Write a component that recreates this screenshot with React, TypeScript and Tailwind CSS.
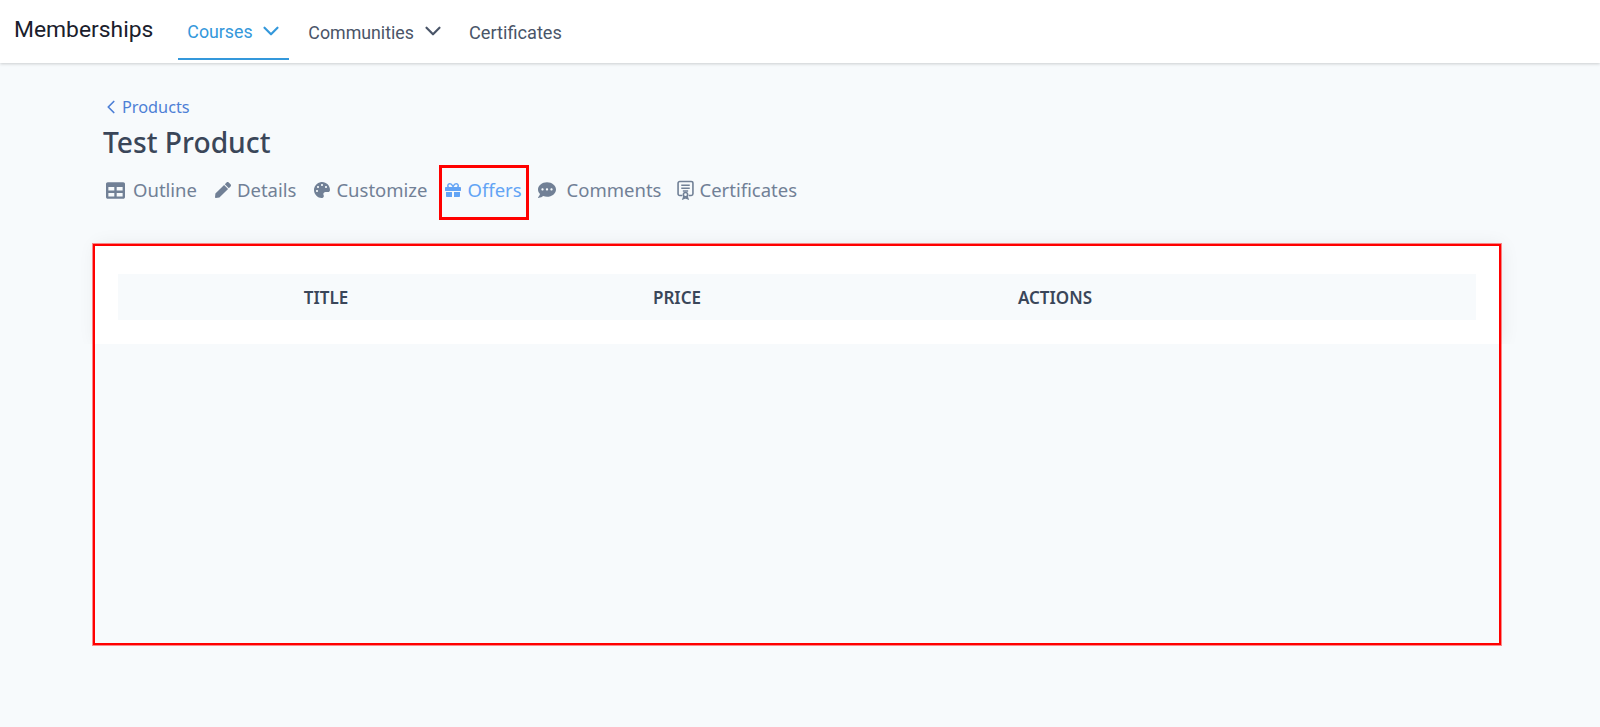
import { ChevronDown, ChevronLeft } from 'lucide-react'
import { FaCommentDots, FaGift, FaPalette, FaPen, FaTable } from 'react-icons/fa'

function CertificateIcon() {
  return (
    <svg width="17" height="20" viewBox="0 0 16 18" fill="none" stroke="currentColor" strokeWidth="1.5">
      <path d="M5 14.2H2.6a1.6 1.6 0 0 1-1.6-1.6V2.6A1.6 1.6 0 0 1 2.6 1h10.8A1.6 1.6 0 0 1 15 2.6v10a1.6 1.6 0 0 1-1.6 1.6H11" />
      <path d="M4 4.6h8M4 7.4h8M5.5 10h5" />
      <circle cx="8" cy="13.4" r="2" />
      <path d="M6.6 15l-.8 2.2L8 16.4l2.2.8-.8-2.2" />
    </svg>
  )
}

const tabs = [
  { label: 'Outline', icon: <FaTable size={19} />, gap: 'gap-[8px]', left: 'ml-[0px]' },
  { label: 'Details', icon: <FaPen size={16} />, gap: 'gap-[6px]', left: 'ml-[18px]' },
  { label: 'Customize', icon: <FaPalette size={16} />, gap: 'gap-[6px]', left: 'ml-[18px]' },
  { label: 'Offers', icon: <FaGift size={16} />, gap: 'gap-[6px]', left: 'ml-[18px]', active: true },
  { label: 'Comments', icon: <FaCommentDots size={18} />, gap: 'gap-[11px]', left: 'ml-[16px]' },
  { label: 'Certificates', icon: <CertificateIcon />, gap: 'gap-[5px]', left: 'ml-[16px]' },
]

export default function App() {
  return (
    <div className="relative min-h-[727px] bg-[#f7fafc] font-['Noto_Sans',sans-serif]">
      {/* Top nav */}
      <header className="h-[63px] bg-white shadow-[0_1px_3px_rgba(0,0,0,0.18)] flex items-stretch pl-[14px] font-['Roboto',sans-serif]">
        <div className="text-[22.85px] text-[#1a202c] leading-[60px]">Memberships</div>
        <nav className="flex ml-[25px] text-[17.8px]">
          <a className="w-[111px] h-[60px] flex items-center pl-[9px] pt-[7px] gap-[5px] text-[#3498db] border-b-2 border-[#3498db]">
            Courses <ChevronDown size={26} strokeWidth={2} className="-my-2 -mt-3" />
          </a>
          <a className="ml-[19px] h-[60px] flex items-center pt-[6px] gap-[6px] text-[#4a5568]">
            Communities <ChevronDown size={26} strokeWidth={2} className="-my-2 -mt-3" />
          </a>
          <a className="ml-[23px] h-[60px] flex items-center pt-[6px] text-[18.2px] text-[#4a5568]">Certificates</a>
        </nav>
      </header>

      <main className="pl-[103px] pr-[100px]">
        <a className="mt-[33px] -ml-[3px] h-[22px] flex items-center text-[16.3px] text-[#4d7fd6]">
          <ChevronLeft size={22} strokeWidth={1.9} /> Products
        </a>
        <h1 className="mt-[5px] text-[28.2px] leading-[38px] font-medium text-[#3a4659]">Test Product</h1>

        <div className="mt-[7px] h-[48px] flex items-start pt-[9px] pl-[3px] text-[18.5px] leading-[26px] text-[#718096]">
          {tabs.map(t => (
            <div key={t.label} className={`flex items-center ${t.gap} ${t.left} ${t.active ? 'text-[#63a4f5]' : ''}`}>
              {t.icon}
              <span>{t.label}</span>
            </div>
          ))}
        </div>

        {/* Offers table */}
        <section className="mt-[29px] -ml-[9px] w-[1406px] h-[99px] bg-white shadow-[2px_0_18px_rgba(0,0,0,0.07)] [clip-path:inset(-30px_-30px_0_-30px)] px-[24px] pt-[29px]">
          <div className="h-[46px] pt-[1px] bg-[#f7fafc] grid grid-cols-[416px_286px_470px_1fr] items-center text-center text-[17px] font-semibold text-[#3a4659]">
            <div>TITLE</div>
            <div>PRICE</div>
            <div>ACTIONS</div>
            <div />
          </div>
        </section>
      </main>

      {/* Red annotations */}
      <div className="absolute left-[439px] top-[165px] w-[90px] h-[55px] border-[3px] border-[#ff0000]" />
      <div className="absolute left-[93px] top-[244px] w-[1408px] h-[401px] border-2 border-[#ff0000] shadow-[0_0_0_1px_rgba(255,0,0,0.45)]" />
    </div>
  )
}
